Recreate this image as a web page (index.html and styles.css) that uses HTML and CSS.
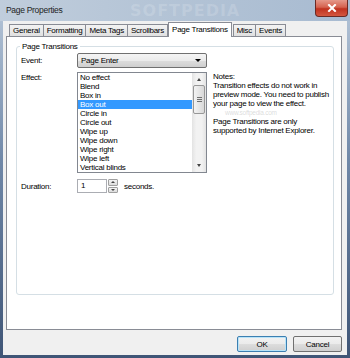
FILE: index.html
```html
<!DOCTYPE html>
<html lang="en">
<head>
  <meta charset="UTF-8">
  <title>Page Properties</title>
  <link rel="stylesheet" href="styles.css">
</head>
<body>
  <div class="window">
    <div class="titlebar">
      <span class="title">Page Properties</span>
      <span class="watermark">SOFTPEDIA</span>
      <div class="close-btn">
        <svg width="10" height="8" viewBox="0 0 10 8">
          <path d="M2 1 L8 7 M8 1 L2 7" stroke="#fff" stroke-width="2" stroke-linecap="square"/>
        </svg>
      </div>
    </div>

    <div class="client">
      <div class="tabs">
        <div class="tab">General</div>
        <div class="tab">Formatting</div>
        <div class="tab">Meta Tags</div>
        <div class="tab">Scrollbars</div>
        <div class="tab active">Page Transitions</div>
        <div class="tab">Misc</div>
        <div class="tab">Events</div>
      </div>

      <div class="panel">
        <div class="group">
          <span class="legend">Page Transitions</span>

          <div class="row event-row">
            <span class="label">Event:</span>
            <div class="combo">
              <span>Page Enter</span>
              <span class="combo-arrow"></span>
            </div>
          </div>

          <div class="row effect-row">
            <span class="label">Effect:</span>
            <div class="listbox">
              <ul class="items">
                <li>No effect</li>
                <li>Blend</li>
                <li>Box in</li>
                <li class="selected">Box out</li>
                <li>Circle in</li>
                <li>Circle out</li>
                <li>Wipe up</li>
                <li>Wipe down</li>
                <li>Wipe right</li>
                <li>Wipe left</li>
                <li>Vertical blinds</li>
              </ul>
              <div class="scrollbar">
                <div class="sb-btn"><span class="tri-up"></span></div>
                <div class="sb-track">
                  <div class="sb-thumb"><span class="grip"></span></div>
                </div>
                <div class="sb-btn"><span class="tri-down"></span></div>
              </div>
            </div>
            <div class="notes">
              <p>Notes:<br>Transition effects do not work in preview mode. You need to publish your page to view the effect.</p>
              <span class="site-mark">www.softpedia.com</span>
              <p>Page Transitions are only supported by Internet Explorer.</p>
            </div>
          </div>

          <div class="row duration-row">
            <span class="label">Duration:</span>
            <div class="spin-input">
              <span class="spin-value">1</span>
            </div>
            <div class="spinner">
              <div class="spin-btn"><span class="tri-up small"></span></div>
              <div class="spin-btn"><span class="tri-down small"></span></div>
            </div>
            <span class="unit">seconds.</span>
          </div>
        </div>
      </div>

      <div class="footer">
        <button class="btn default">OK</button>
        <button class="btn">Cancel</button>
      </div>
    </div>
  </div>
</body>
</html>
```

FILE: styles.css
```css
* {
  box-sizing: border-box;
}

body {
  margin: 0;
  width: 350px;
  height: 358px;
  overflow: hidden;
  font-family: 'Liberation Sans', Arial, sans-serif;
  font-size: 8px;
  letter-spacing: -0.25px;
  color: #000;
  background: linear-gradient(to bottom, #c4d1df 0, #aebfd3 22px, #7088a8 160px, #3f5576 358px);
}

.window {
  height: 358px;
  display: flex;
  flex-direction: column;
}

/* title bar */
.titlebar {
  height: 21px;
  position: relative;
  display: flex;
  align-items: center;
  padding-left: 6px;
  background: linear-gradient(to right, #c0cddc 0, #b4c4d6 45%, #a8bbd1 100%);
}

.title {
  font-size: 8.5px;
  color: #1e1e1e;
  letter-spacing: -0.3px;
  margin-top: -2px;
}

.watermark {
  position: absolute;
  left: 130px;
  top: 1px;
  font-family: 'DejaVu Sans', sans-serif;
  font-weight: bold;
  font-size: 16px;
  line-height: 19px;
  letter-spacing: 1px;
  color: rgba(255, 255, 255, 0.16);
}

.close-btn {
  position: absolute;
  right: 2px;
  top: 0;
  width: 33px;
  height: 17px;
  display: flex;
  align-items: center;
  justify-content: center;
  border: 1px solid #6b2a24;
  border-top: none;
  border-radius: 0 0 4px 4px;
  background: linear-gradient(to bottom, #e5988a 0, #d5624f 45%, #c0321f 55%, #d4573f 100%);
}

/* client area */
.client {
  flex: 1;
  margin: 0 3px 3px 3px;
  padding: 1px 5px 0 3px;
  background: #f0f0f0;
  display: flex;
  flex-direction: column;
}

.tabs {
  height: 15px;
  display: flex;
  align-items: flex-end;
  padding-left: 3px;
  margin-bottom: -1px;
  position: relative;
  z-index: 1;
}

.tab {
  height: 12px;
  margin-bottom: 1px;
  padding: 0 3px;
  line-height: 11px;
  border: 1px solid #898c95;
  border-bottom: none;
  margin-right: -1px;
  background: linear-gradient(to bottom, #f3f3f3, #e0e0e0);
  white-space: nowrap;
}

.tab.active {
  height: 15px;
  margin: 0 0 0 1px;
  padding: 1px 3px 0;
  background: #fff;
  position: relative;
}

.tab.active + .tab {
  margin-left: 1px;
}

.panel {
  height: 294px;
  border: 1px solid #898c95;
  background: #fff;
}

/* group box */
.group {
  margin: 9px 7px 0 9px;
  height: 249px;
  padding: 0 4px;
  border: 1px solid #d5dfe5;
  border-radius: 3px;
}

.legend {
  display: block;
  width: max-content;
  margin: -5px 0 0 -1px;
  padding: 0 2px;
  line-height: 9px;
  background: #fff;
}

.row {
  display: flex;
  align-items: flex-start;
}

.label {
  width: 56px;
  flex-shrink: 0;
  line-height: 9px;
}

.event-row {
  margin-top: 2px;
  align-items: center;
}

.combo {
  width: 130px;
  height: 15px;
  display: flex;
  align-items: center;
  justify-content: space-between;
  padding: 0 5px 0 3px;
  border: 1px solid #707070;
  border-radius: 2px;
  background: linear-gradient(to bottom, #f4f4f4 0, #ebebeb 50%, #dddddd 51%, #cfcfcf 100%);
}

.combo-arrow {
  width: 0;
  height: 0;
  border-left: 3px solid transparent;
  border-right: 3px solid transparent;
  border-top: 3px solid #000;
}

.effect-row {
  margin-top: 4px;
}

.effect-row .label {
  padding-top: 1px;
}

.listbox {
  width: 130px;
  height: 101px;
  flex-shrink: 0;
  display: flex;
  border: 1px solid #828790;
  background: #fff;
}

.items {
  list-style: none;
  margin: 0;
  padding: 0;
  flex: 1;
}

.items li {
  height: 9px;
  line-height: 9px;
  padding-left: 2px;
  white-space: nowrap;
}

.items li.selected {
  background: #3399ff;
  color: #fff;
}

.scrollbar {
  width: 14px;
  display: flex;
  flex-direction: column;
  background: linear-gradient(to right, #e3e3e3, #f2f2f2 30%, #f2f2f2 70%, #e3e3e3);
}

.sb-btn {
  height: 13px;
  display: flex;
  align-items: center;
  justify-content: center;
}

.sb-track {
  flex: 1;
}

.sb-thumb {
  height: 29px;
  margin: -1px 1px 0;
  border: 1px solid #979797;
  border-radius: 2px;
  background: linear-gradient(to right, #f3f3f3, #e6e6e6 50%, #d8d8d8);
  display: flex;
  align-items: center;
  justify-content: center;
}

.grip {
  width: 5px;
  height: 5px;
  background: repeating-linear-gradient(to bottom, #707070 0, #707070 1px, transparent 1px, transparent 2px);
}

.tri-up,
.tri-down {
  width: 0;
  height: 0;
  border-left: 2.5px solid transparent;
  border-right: 2.5px solid transparent;
}

.tri-up {
  border-bottom: 3px solid #444;
}

.tri-down {
  border-top: 3px solid #444;
}

.tri-up.small {
  border-bottom-width: 2px;
}

.tri-down.small {
  border-top-width: 2px;
}

.notes {
  margin-left: 6px;
  line-height: 9px;
  width: 118px;
}

.notes p {
  margin: 0;
}

.site-mark {
  display: block;
  height: 9px;
  padding-left: 12px;
  font-size: 6.5px;
  line-height: 9px;
  color: rgba(150, 150, 150, 0.35);
}

.duration-row {
  margin-top: 6px;
  align-items: center;
}

.spin-input {
  width: 30px;
  height: 14px;
  border: 1px solid #abadb3;
  padding-left: 3px;
  line-height: 12px;
}

.spinner {
  width: 10px;
  height: 14px;
  display: flex;
  flex-direction: column;
  gap: 1px;
  margin-left: 1px;
}

.spin-btn {
  flex: 1;
  border: 1px solid #a0a0a0;
  border-radius: 1px;
  background: linear-gradient(to bottom, #f3f3f3, #dcdcdc);
  display: flex;
  align-items: center;
  justify-content: center;
}

.unit {
  margin-left: 6px;
}

/* dialog buttons */
.footer {
  display: flex;
  justify-content: flex-end;
  gap: 6px;
  padding-top: 6px;
}

.btn {
  width: 49px;
  height: 16px;
  padding: 0;
  font-family: inherit;
  font-size: 8px;
  letter-spacing: -0.25px;
  color: #000;
  border: 1px solid #707070;
  border-radius: 2px;
  background: linear-gradient(to bottom, #f2f2f2 0, #ebebeb 50%, #dddddd 51%, #cfcfcf 100%);
}

.btn.default {
  width: 50px;
  border-color: #3c7fb1;
  box-shadow: inset 0 0 0 1px #b8e3f8;
}
```
